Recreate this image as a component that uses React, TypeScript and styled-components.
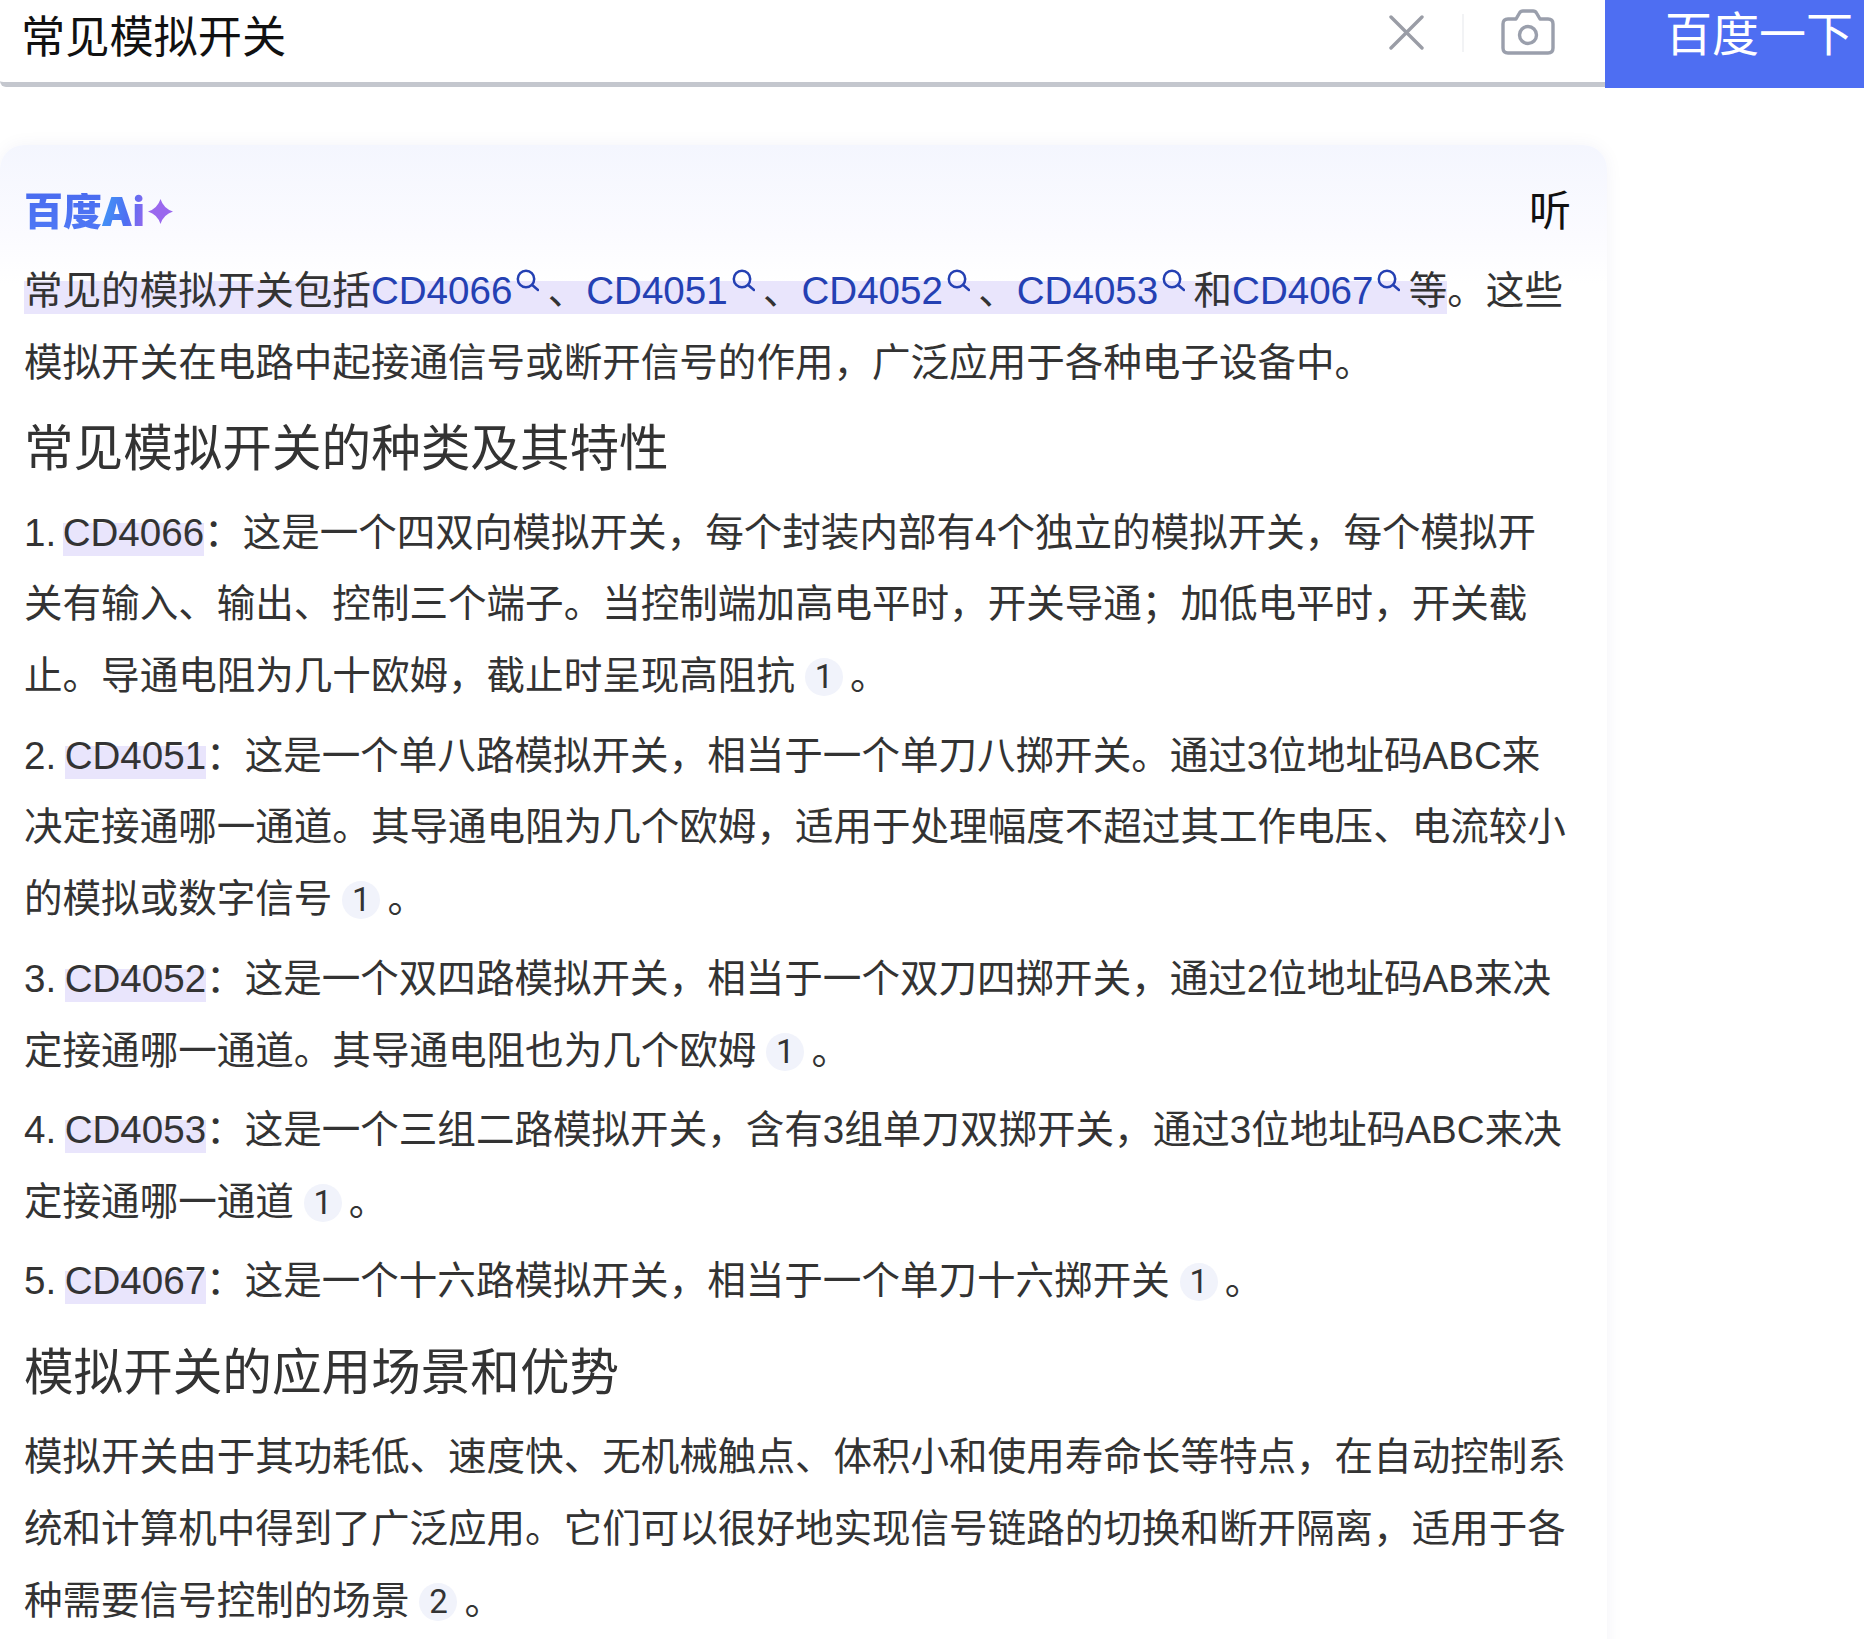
import * as React from 'react'
import styled, { createGlobalStyle } from 'styled-components'

const GlobalStyle = createGlobalStyle`
  html, body {
    margin: 0;
    padding: 0;
    background: #fff;
  }
  body {
    font-family: "Liberation Sans", "Noto Sans CJK SC", sans-serif;
    color: #333;
  }
`

const Page = styled.div`
  height: 100vh;
  overflow: hidden;
`

const SearchRow = styled.div`
  display: flex;
  height: 88px;
`

const SearchBox = styled.div`
  flex: 1;
  display: flex;
  align-items: flex-start;
  box-sizing: border-box;
  height: 87px;
  border-bottom: 5px solid #c4c7ce;
  border-bottom-left-radius: 6px;
  padding-left: 21px;
`

const QueryText = styled.div`
  flex: 1;
  font-size: 44.2px;
  line-height: 76px;
  color: #111;
`

const ClearIcon = styled.svg`
  width: 35px;
  height: 35px;
  margin-top: 15px;
`

const Divider = styled.div`
  width: 2px;
  height: 38px;
  margin: 14px 37px 0 38px;
  background: #f2f3f5;
`

const CameraIcon = styled.svg`
  width: 54px;
  height: 46px;
  margin: 9px 50px 0 0;
`

const SearchButton = styled.div`
  width: 259px;
  box-sizing: border-box;
  padding-left: 60px;
  background: #4e6ef2;
  color: #fff;
  font-size: 47px;
  line-height: 69px;
  white-space: nowrap;
  overflow: hidden;
`

const Card = styled.div`
  box-sizing: border-box;
  width: 1607px;
  margin-top: 57px;
  padding: 48px 39px 40px 24px;
  border-radius: 24px 24px 0 0;
  background: linear-gradient(180deg, #f4f6fe 0, #fbfbff 90px, #fff 140px);
  box-shadow: 0 0 18px rgba(30, 40, 110, 0.05);
`

const CardHeader = styled.div`
  display: flex;
  justify-content: space-between;
  align-items: center;
  height: 37px;
  margin-bottom: 25px;
`

const Logo = styled.div`
  display: flex;
  align-items: center;
`

const LogoCn = styled.span`
  font-size: 39px;
  line-height: 37px;
  font-weight: 900;
  background: linear-gradient(180deg, #4a6cf0 0, #4f78f5 100%);
  -webkit-background-clip: text;
  background-clip: text;
  color: transparent;
`

const LogoAi = styled.span`
  margin-left: -1px;
  font-family: "Inter", "Liberation Sans", sans-serif;
  font-size: 40px;
  line-height: 37px;
  font-weight: 900;
  background: linear-gradient(100deg, #3f9bf7 0, #4e6ef2 60%, #9a68ee 100%);
  -webkit-background-clip: text;
  background-clip: text;
  color: transparent;
`

const LogoStar = styled.svg`
  width: 25px;
  height: 25px;
  margin-left: 3px;
`

const ListenLabel = styled.span`
  margin-right: -3px;
  font-size: 42px;
  line-height: 37px;
  color: #111;
`

const Paragraph = styled.p`
  margin: 0;
  font-size: 38.55px;
  line-height: 71.8px;
`

const Heading = styled.h2<{ $top: number }>`
  margin: ${({ $top }) => $top}px 0 12px;
  font-size: 49.6px;
  line-height: 72px;
  font-weight: 400;
`

const Item = styled(Paragraph)`
  margin-top: 7.7px;
  ${ Heading } + & {
    margin-top: 0;
  }
`

const Mark = styled.span`
  padding-bottom: 2px;
  background: linear-gradient(#e9e5fc, #e9e5fc) 0 100% / 100% 33px no-repeat;
`

const SearchLink = styled.span`
  color: #2440b3;
`

const LinkIcon = styled.svg`
  display: inline-block;
  width: 23px;
  height: 24px;
  margin: 0 8.3px 0 4px;
  vertical-align: 12px;
`

const Ordinal = styled.span<{ $gap: number }>`
  margin-right: ${({ $gap }) => $gap}px;
`

const Cite = styled.span`
  display: inline-block;
  width: 38px;
  height: 38px;
  margin: 0 7px 0 10px;
  border-radius: 19px;
  background: #f1f3fb;
  color: #333;
  font-family: "Roboto", "Liberation Sans", sans-serif;
  font-size: 33px;
  line-height: 38px;
  text-align: center;
  vertical-align: 1px;
`

const Term: React.FC<{ children: React.ReactNode }> = ({ children }) => (
  <SearchLink>
    { children }
    <LinkIcon viewBox="0 0 23 24" fill="none" stroke="#2440b3" strokeWidth="2.5" strokeLinecap="round">
      <circle cx="10" cy="11" r="8.2" />
      <path d="M16.2 17 L22 22" />
    </LinkIcon>
  </SearchLink>
)

const items = [
  { no: '1.', gap: 6.5, code: 'CD4066', text: '：这是一个四双向模拟开关，每个封装内部有4个独立的模拟开关，每个模拟开关有输入、输出、控制三个端子。当控制端加高电平时，开关导通；加低电平时，开关截止。导通电阻为几十欧姆，截止时呈现高阻抗' },
  { no: '2.', gap: 8.5, code: 'CD4051', text: '：这是一个单八路模拟开关，相当于一个单刀八掷开关。通过3位地址码ABC来决定接通哪一通道。其导通电阻为几个欧姆，适用于处理幅度不超过其工作电压、电流较小的模拟或数字信号' },
  { no: '3.', gap: 8.5, code: 'CD4052', text: '：这是一个双四路模拟开关，相当于一个双刀四掷开关，通过2位地址码AB来决定接通哪一通道。其导通电阻也为几个欧姆' },
  { no: '4.', gap: 8.5, code: 'CD4053', text: '：这是一个三组二路模拟开关，含有3组单刀双掷开关，通过3位地址码ABC来决定接通哪一通道' },
  { no: '5.', gap: 8.5, code: 'CD4067', text: '：这是一个十六路模拟开关，相当于一个单刀十六掷开关' },
]

const App: React.FC = () => (
  <Page>
    <GlobalStyle />
    <SearchRow>
      <SearchBox>
        <QueryText>常见模拟开关</QueryText>
        <ClearIcon viewBox="0 0 35 35" fill="none" stroke="#9a9da6" strokeWidth="3.4" strokeLinecap="round">
          <path d="M2 2 L33 33 M33 2 L2 33" />
        </ClearIcon>
        <Divider />
        <CameraIcon viewBox="0 0 54 46" fill="none" stroke="#9a9fac" strokeWidth="3.4" strokeLinejoin="round">
          <path d="M7 10 H15 L18.5 4 Q19.5 2 22 2 H32 Q34.5 2 35.5 4 L39 10 H47 Q52 10 52 15 V39 Q52 44 47 44 H7 Q2 44 2 39 V15 Q2 10 7 10 Z" />
          <circle cx="27" cy="26" r="8.5" />
        </CameraIcon>
      </SearchBox>
      <SearchButton>百度一下</SearchButton>
    </SearchRow>
    <Card>
      <CardHeader>
        <Logo>
          <LogoCn>百度</LogoCn>
          <LogoAi>Ai</LogoAi>
          <LogoStar viewBox="0 0 25 25">
            <path d="M12.5 0 Q15.5 9.5 25 12.5 Q15.5 15.5 12.5 25 Q9.5 15.5 0 12.5 Q9.5 9.5 12.5 0 Z" fill="#9a68ee" />
          </LogoStar>
        </Logo>
        <ListenLabel>听</ListenLabel>
      </CardHeader>
      <Paragraph>
        <Mark>
          常见的模拟开关包括<Term>CD4066</Term>、<Term>CD4051</Term>、<Term>CD4052</Term>、<Term>CD4053</Term>和<Term>CD4067</Term>等
        </Mark>
        。这些模拟开关在电路中起接通信号或断开信号的作用，广泛应用于各种电子设备中。
      </Paragraph>
      <Heading $top={ 14 }>常见模拟开关的种类及其特性</Heading>
      { items.map((item) => (
        <Item key={ item.code }>
          <Ordinal $gap={ item.gap }>{ item.no }</Ordinal>
          <Mark>{ item.code }</Mark>
          { item.text }
          <Cite>1</Cite>。
        </Item>
      )) }
      <Heading $top={ 20 }>模拟开关的应用场景和优势</Heading>
      <Paragraph>
        模拟开关由于其功耗低、速度快、无机械触点、体积小和使用寿命长等特点，在自动控制系统和计算机中得到了广泛应用。它们可以很好地实现信号链路的切换和断开隔离，适用于各种需要信号控制的场景
        <Cite>2</Cite>。
      </Paragraph>
    </Card>
  </Page>
)

export default App
